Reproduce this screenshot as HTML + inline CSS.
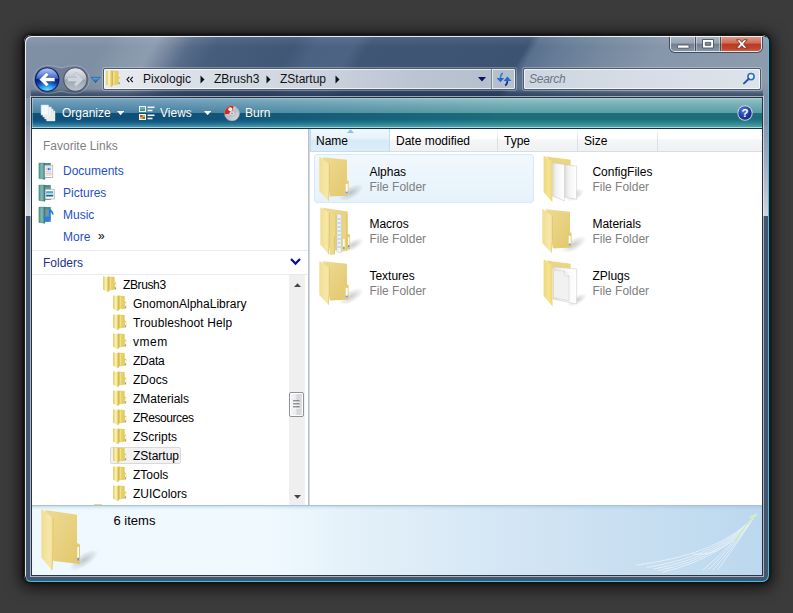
<!DOCTYPE html>
<html><head><meta charset="utf-8">
<style>
html,body{margin:0;padding:0;}
body{width:793px;height:613px;overflow:hidden;background:#3b3b3b;position:relative;font-family:"Liberation Sans",sans-serif;font-size:12px;color:#000;}
.abs{position:absolute;}
#shadow{left:24px;top:35px;width:745px;height:547px;border-radius:7px;box-shadow:0 2px 14px 5px rgba(0,0,0,.62),0 0 3px 1px rgba(0,0,0,.7);}
#win{left:24px;top:35px;width:745px;height:547px;border-radius:7px;overflow:hidden;background:#1c1c1c;}
#glass{left:0;top:0;width:745px;height:547px;
 background:linear-gradient(90deg,#8595a9 0px,#8092a8 120px,#7488a0 200px,#5d7391 300px,#47607f 390px,#425a7a 500px,#7f93ab 745px);}
#glasstop{left:0;top:0;width:745px;height:63px;
 background:
  linear-gradient(180deg,rgba(255,255,255,.10) 0,rgba(255,255,255,0) 12px,rgba(20,35,60,0) 45px,rgba(20,35,60,.10) 63px),
  linear-gradient(120deg,#8090a4 8.0px,#7f8fa3 73.8px,#8797aa 92.9px,#8d9cb0 117.1px,#7888a0 131.0px,#566c89 148.3px,#465d7c 170.8px,#405776 238.4px,#4b6283 257.4px,#4c6384 290.3px,#3f5675 304.2px,#3c5372 441.0px,#5a718e 448.8px,#667c97 472.2px,#74889f 506.8px,#8797ab 558.8px,#8c9bae 652.3px);}
#glassdark{left:0;top:181px;width:745px;height:366px;background:#43566f;}
#glasslite{left:0;top:90px;width:745px;height:91px;background:linear-gradient(180deg,rgba(255,255,255,.05),rgba(255,255,255,.25) 40%,rgba(255,255,255,.62));}
#edge{left:0;top:0;width:743px;height:545px;border-radius:7px;border:1px solid #1c1c1c;border-right-color:#37c4ee;border-bottom-color:#37c4ee;box-shadow:inset 1px 1px 0 rgba(255,255,255,.85);}
#band{left:7px;top:54px;width:732px;height:8px;background:linear-gradient(180deg,rgba(30,48,80,.0),rgba(30,48,80,.55) 50%,rgba(30,48,80,.72));}

#client{left:-24px;top:-35px;width:793px;height:613px;}
/* caption buttons */
#cap{left:670px;top:36px;width:92px;height:16px;border:1px solid rgba(255,255,255,.75);border-top:none;border-radius:0 0 5px 5px;box-sizing:border-box;overflow:hidden;box-shadow:0 0 0 1px rgba(40,50,65,.75);}
#cap .b{position:absolute;top:0;height:16px;}
#bmin{left:0;width:24px;box-shadow:inset -1px 0 0 rgba(255,255,255,.35);background:linear-gradient(180deg,#aeb8c5 0,#98a4b3 45%,#6f7e91 50%,#8c99a9 100%);border-right:1px solid rgba(40,50,65,.7);}
#bmax{left:25px;width:24px;box-shadow:inset 1px 0 0 rgba(255,255,255,.35),inset -1px 0 0 rgba(255,255,255,.35);background:linear-gradient(180deg,#aeb8c5 0,#98a4b3 45%,#6f7e91 50%,#8c99a9 100%);border-right:1px solid rgba(40,50,65,.7);}
#bclose{left:50px;width:42px;box-shadow:inset 1px 0 0 rgba(255,255,255,.35);background:linear-gradient(180deg,#e0a090 0,#cf6a55 45%,#b73a22 50%,#c5452c 80%,#d66a48 100%);}
/* address */
#addr{left:103px;top:68px;width:413px;height:22px;box-sizing:border-box;border:1px solid #4d5c70;border-radius:2px;background:linear-gradient(90deg,rgba(238,241,245,.93),rgba(226,231,238,.9) 40%,rgba(205,213,223,.88) 75%,rgba(196,205,216,.88));box-shadow:inset 0 0 0 1px rgba(255,255,255,.7),0 0 0 1px rgba(255,255,255,.28);}
#srch{left:523px;top:68px;width:238px;height:22px;box-sizing:border-box;border:1px solid #4d5c70;border-radius:2px;background:linear-gradient(90deg,rgba(214,221,230,.92),rgba(228,233,240,.92));box-shadow:inset 0 0 0 1px rgba(255,255,255,.7),0 0 0 1px rgba(255,255,255,.28);}
.at{position:absolute;top:72px;font-size:12px;line-height:14px;color:#111;white-space:nowrap;}
/* toolbar */
#tb{left:32px;top:98px;width:730px;height:31px;background:linear-gradient(180deg,#a4c6d8 0px,#7ea8c1 1px,#6f9dba 3px,#5a8eae 9px,#47819f 15px,#0f5079 15px,#0e4f78 21px,#15598a 24px,#2f7d9b 27px,#4a97ad 29px,#9fd0e0 29px,#9fd0e0 30px,#0b2947 30px);}
#tb2{left:32px;top:98px;width:730px;height:31px;background:linear-gradient(180deg,#b4d8da 0px,#93c3c8 1px,#86babf 3px,#6eaab1 9px,#5a9ea6 15px,#1e6f7b 15px,#1d6d79 21px,#25808a 24px,#3d9499 27px,#52a4a7 29px,#a8dada 29px,#a8dada 30px,#0b2947 30px);-webkit-mask-image:linear-gradient(90deg,rgba(0,0,0,0) 120px,rgba(0,0,0,1) 480px);mask-image:linear-gradient(90deg,rgba(0,0,0,0) 120px,rgba(0,0,0,1) 480px);}
#tbhl{left:32px;top:98px;width:1px;height:30px;background:rgba(255,255,255,.35);}
.tt{position:absolute;top:106px;font-size:12px;line-height:14px;color:#fff;white-space:nowrap;text-shadow:0 0 1px rgba(0,0,0,.25);}
#tbborder{left:31px;top:97px;width:732px;height:479px;box-sizing:border-box;border:1px solid #27323f;pointer-events:none;}
#tbborder2{left:30px;top:96px;width:734px;height:481px;box-sizing:border-box;border:1px solid rgba(255,255,255,.55);pointer-events:none;}
/* panes */
#left{left:32px;top:128px;width:276px;height:377px;background:#fff;overflow:hidden;}
#divider{left:308px;top:128px;width:2px;height:377px;background:linear-gradient(90deg,#a9b4c2,#dfe4ea);}
#right{left:310px;top:128px;width:452px;height:377px;background:#fff;overflow:hidden;}
#det{left:32px;top:505px;width:730px;height:70px;background:linear-gradient(180deg,rgba(140,180,210,.45) 0,rgba(140,180,210,.18) 1.5px,rgba(140,180,210,0) 4px),linear-gradient(90deg,#eef8fe 0,#f0f9fe 230px,#e3f0f9 330px,#cfe3f3 520px,#bcd8ee 730px);border-top:1px solid #a9c5d9;box-sizing:border-box;overflow:hidden;}

/* left pane (coords relative to #left: page x-32, y-128) */
.fl{position:absolute;left:31px;font-size:12px;line-height:14px;color:#1f50c4;white-space:nowrap;}
.hd{position:absolute;font-size:12px;line-height:14px;white-space:nowrap;}
.sep{position:absolute;left:0;width:276px;height:1px;background:#e9eaec;}
.tr{position:absolute;font-size:12px;line-height:14px;color:#000;white-space:nowrap;}
#sb{left:257px;top:147px;width:16px;height:231px;background:#efefef;}
#thumb{left:257px;top:264px;width:15px;height:25px;box-sizing:border-box;border:1px solid #8e9298;border-radius:2px;background:linear-gradient(90deg,#f6f6f6 0,#ececec 45%,#d4d6d9 55%,#dfe0e2 100%);box-shadow:inset 0 0 0 1px #fff;}
#sel{left:78px;top:319px;width:71px;height:17px;box-sizing:border-box;border:1px solid #d9d9d9;border-radius:2px;background:#f2f2f2;}

/* right pane (relative: page x-310, y-128) */
#hdr{left:0;top:0;width:452px;height:24px;background:linear-gradient(180deg,#fff 0,#fff 45%,#f4f5f6 55%,#f0f1f2 100%);border-bottom:1px solid #d9dde2;box-sizing:border-box;}
#hname{left:0;top:0;width:80px;height:24px;box-sizing:border-box;border:1px solid #c3dcee;border-top:none;background:linear-gradient(180deg,#f3f9fd 0,#e6f2fa 45%,#d6eaf7 55%,#dcedf8 100%);}
.hs{position:absolute;top:0;width:1px;height:23px;background:linear-gradient(180deg,#fff,#dcdfe3 50%,#dcdfe3);}
.ht{position:absolute;top:6px;font-size:12px;line-height:14px;color:#000;white-space:nowrap;}
.it{position:absolute;font-size:12px;line-height:14px;color:#000;white-space:nowrap;}
.is{position:absolute;font-size:12px;line-height:14px;color:#808080;white-space:nowrap;}
#isel{left:4px;top:26px;width:220px;height:49px;box-sizing:border-box;border:1px solid #d6eaf7;border-radius:3px;background:linear-gradient(180deg,#f1f8fd,#e6f2fb);}

#detline{left:32px;top:575px;width:730px;height:1px;background:#2b3644;}
</style></head><body>

<svg width="0" height="0" style="position:absolute">
 <defs>
  <linearGradient id="gf" x1="0" y1="0" x2="1" y2="0"><stop offset="0" stop-color="#f6e9a8"/><stop offset="1" stop-color="#ead27c"/></linearGradient>
  <linearGradient id="gb" x1="0" y1="0" x2="1" y2="0"><stop offset="0" stop-color="#e6cf7c"/><stop offset="1" stop-color="#efdc94"/></linearGradient>
    <linearGradient id="gsf" x1="0" y1="0" x2="1" y2="0"><stop offset="0" stop-color="#dcc24a"/><stop offset=".3" stop-color="#f3e594"/><stop offset=".5" stop-color="#fbf5cc"/><stop offset=".75" stop-color="#ecd878"/><stop offset="1" stop-color="#d9bd4c"/></linearGradient>
  <linearGradient id="gsb" x1="0" y1="0" x2="1" y2="0"><stop offset="0" stop-color="#d4b848"/><stop offset=".35" stop-color="#e9d470"/><stop offset="1" stop-color="#dfc558"/></linearGradient>
  <symbol id="sf" viewBox="0 0 14 16">
   <path d="M4.5 0.5 L11.7 0.9 L11.7 6.6 L13.2 7 L13.2 13.4 L5 14.6 Z" fill="url(#gsb)"/>
   <path d="M0.2 0.2 L5.7 1.4 L5.7 15.9 L4.6 15.9 L0.2 13.8 Z" fill="url(#gsf)"/>
   <path d="M6.7 2 L7.7 2.1 L7.7 13.4 L6.7 13.6 Z" fill="#f6eaa6" opacity=".85"/>
   <path d="M5.7 1.4 L6.3 1.6 L6.3 14.4 L5.7 14.6 Z" fill="#c9ad42" opacity=".8"/>
   <rect x="11.9" y="8" width=".9" height="5" fill="#fff"/><rect x="11.9" y="11.4" width=".9" height="1.5" fill="#3f86e6"/>
  </symbol>

  <linearGradient id="gfl" x1="0" y1="0" x2="1" y2="0"><stop offset="0" stop-color="#f1dd8f"/><stop offset=".7" stop-color="#f6e8ab"/><stop offset="1" stop-color="#efdb8c"/></linearGradient>
  <linearGradient id="gbk" x1="0" y1="0" x2="1" y2="1"><stop offset="0" stop-color="#eedb92"/><stop offset="1" stop-color="#e2c76c"/></linearGradient>
  <linearGradient id="gpg" x1="0" y1="0" x2="1" y2="0"><stop offset="0" stop-color="#dedede"/><stop offset=".35" stop-color="#f3f3f3"/><stop offset="1" stop-color="#ffffff"/></linearGradient>
  <radialGradient id="gsh" cx=".5" cy=".5" r=".5"><stop offset="0" stop-color="#000" stop-opacity=".2"/><stop offset="1" stop-color="#000" stop-opacity="0"/></radialGradient>
  <symbol id="bf" viewBox="0 0 48 52">
   <ellipse cx="35" cy="39.5" rx="14" ry="6" fill="url(#gsh)" transform="rotate(-30 35 39.5)"/>
   <path d="M6.7 4.3 L31 6.8 L31 27.3 L32.6 28 L32.6 42.5 L14 43.5 Z" fill="url(#gbk)"/>
   <path d="M3.3 3.4 L14 11.7 L14 31.2 L12.6 47.9 L3.3 38 Z" fill="url(#gfl)"/>
   <path d="M14 11.7 L14 31.2 L12.6 47.9 L12.2 47.5 L13.2 31 L13.2 11.2 Z" fill="#e0c566"/>
   <rect x="29.7" y="30.8" width="2" height="10.2" fill="#fff"/><rect x="29.7" y="38.6" width="2" height="2" fill="#5b96e6"/>
  </symbol>
  <linearGradient id="gfl2" x1="0" y1="0" x2="1" y2="0"><stop offset="0" stop-color="#f0d878"/><stop offset=".6" stop-color="#f5e394"/><stop offset="1" stop-color="#eed672"/></linearGradient>
  <symbol id="bf1" viewBox="0 0 48 52">
   <ellipse cx="38" cy="43" rx="11" ry="4.5" fill="url(#gsh)" transform="rotate(-28 38 43)"/>
   <path d="M7 3.5 L31.7 6.7 L31.7 12 L14 12 Z" fill="#ecd57f"/>
   <path d="M14 9.7 L37.6 12 L37.6 47 L14 42 Z" fill="url(#gpg)" stroke="#c9c9c9" stroke-width=".5"/>
   <path d="M14.5 13.2 L25.2 14 L25.6 18.4 L30 19.4 L30 43.8 L14.5 40.6 Z" fill="#f1f1f1" stroke="#d2d2d2" stroke-width=".6"/>
   <path d="M25.2 14 L30 19.4 L25.6 18.4 Z" fill="#fff" stroke="#c8c8c8" stroke-width=".5"/>
   <path d="M4.6 2.3 L13.5 8.7 L13.5 49.3 L4.6 39 Z" fill="url(#gfl2)"/>
  </symbol>
  <symbol id="bf2" viewBox="0 0 48 52">
   <ellipse cx="36" cy="42" rx="10" ry="5" fill="url(#gsh)" transform="rotate(-28 36 42)"/>
   <path d="M7 3.5 L31.7 6.7 L31.7 12 L14 12 Z" fill="#ecd57f"/>
   <path d="M25.8 11.7 L37.6 13 L37.6 46.4 L25.8 44 Z" fill="url(#gpg)" stroke="#c4c4c4" stroke-width=".5"/>
   <path d="M13.6 9.7 L25.4 11.5 L25.4 47.9 L13.6 43 Z" fill="url(#gpg)" stroke="#c4c4c4" stroke-width=".5"/>
   <path d="M4.6 2.4 L13.4 9.2 L13.4 49.3 L4.6 39 Z" fill="url(#gfl2)"/>
  </symbol>
  <symbol id="bf3" viewBox="0 0 48 52">
   <ellipse cx="37" cy="40" rx="12" ry="5" fill="url(#gsh)" transform="rotate(-28 37 40)"/>
   <path d="M6.7 2.8 L31.7 6.5 L31.7 28.8 L34.1 29.7 L34.1 43.9 L14 46 Z" fill="url(#gbk)"/>
   <path d="M25.3 8.2 L31.2 9 L31.2 45.2 L25.3 46.9 Z" fill="#e9d480"/>
   <path d="M30.4 9 L31.2 9 L31.2 45.2 L30.4 45.4 Z" fill="#d9bf5e"/>
   <path d="M20.9 9 L25.3 9.6 L25.3 47.8 L20.9 47.2 Z" fill="#eef2f8" stroke="#b4c0d0" stroke-width=".4"/>
   <path d="M21.6 14 H24.6 M21.6 18 H24.6 M21.6 22 H24.6 M21.6 26 H24.6 M21.6 30 H24.6 M21.6 34 H24.6 M21.6 38 H24.6 M21.6 42 H24.6" stroke="#a9c0de" stroke-width="1.4" opacity=".7"/>
   <path d="M14 8.6 L20.4 9.7 L20.4 31.2 L19 32 L19 49.3 L14 50 Z" fill="#edd98a"/>
   <path d="M19.6 9.6 L20.4 9.7 L20.4 31.2 L19 32 L19 49.3 L18.3 49.4 L18.3 31.6 L19.6 30.8 Z" fill="#d9bf5e"/>
   <path d="M4.3 2.3 L13.6 8.2 L13.6 31.2 L13.1 49.8 L4.3 39.5 Z" fill="url(#gfl)"/>
   <path d="M13.6 8.2 L13.6 31.2 L13.1 49.8 L12.5 49.1 L12.9 31 L12.9 7.8 Z" fill="#dcc262"/>
   <rect x="27.2" y="34" width="1.4" height="10" fill="#fff"/><rect x="27.2" y="41.8" width="1.4" height="2.2" fill="#4f90e6"/>
   <rect x="32.1" y="32.2" width="1.3" height="10" fill="#fff"/><rect x="32.1" y="40" width="1.3" height="2.2" fill="#4f90e6"/>
  </symbol>

  <linearGradient id="gfv" x1="0" y1="0" x2="1" y2="0"><stop offset="0" stop-color="#3a9a76"/><stop offset=".2" stop-color="#62a99c"/><stop offset=".5" stop-color="#8fb3c6"/><stop offset=".8" stop-color="#4f9a8e"/><stop offset="1" stop-color="#28697a"/></linearGradient>
  <symbol id="fvb" viewBox="0 0 18 20">
   <path d="M5 1 L12.8 1 L12.8 15.8 L6.5 16 Z" fill="#4a9484"/>
   <path d="M7 3.2 L12.8 3.2 L12.8 15.8 L7 16 Z" fill="#7d8fa3"/>
   <path d="M0.9 1.1 L7 1.1 L7 17.2 L6 17.2 L0.9 16.4 Z" fill="url(#gfv)" stroke="#2f8468" stroke-width=".4"/>
  </symbol>
 </defs>
</svg>
<div id="shadow" class="abs"></div>
<div id="win" class="abs">
 <div id="glass" class="abs"></div>
 <div id="glasstop" class="abs"></div>
 <div id="glasslite" class="abs"></div>
 <div id="glassdark" class="abs"></div>
 <div id="band" class="abs"></div>

 <div id="client" class="abs">
  <div id="tbborder2" class="abs"></div>
  <div id="tbborder" class="abs"></div>
  <div id="cap" class="abs"><div id="bmin" class="b"></div><div id="bmax" class="b"></div><div id="bclose" class="b"></div></div>

  <svg class="abs" style="left:670px;top:36px" width="93" height="17" viewBox="0 0 93 17">
   <rect x="7.5" y="9" width="11.5" height="3.2" rx=".6" fill="#fff" stroke="#4a5564" stroke-width=".9"/>
   <path d="M32.5 3.5 H43.5 V12 H32.5 Z M35.3 6.4 V9.3 H40.7 V6.4 Z" fill="#fff" fill-rule="evenodd" stroke="#4a5564" stroke-width=".9"/>
   <path d="M66.5 3.8 L69.8 3.8 L71.8 6.3 L73.8 3.8 L77.1 3.8 L73.5 8 L77.3 12.2 L73.9 12.2 L71.8 9.7 L69.7 12.2 L66.3 12.2 L70.1 8 Z" fill="#fff" stroke="#5a2418" stroke-width=".8"/>
  </svg>
  <div id="addr" class="abs"></div>
  <div id="srch" class="abs"></div>
  <div class="at" style="left:143px">Pixologic</div>
  <div class="at" style="left:214px">ZBrush3</div>
  <div class="at" style="left:280px">ZStartup</div>
  <div class="at" style="left:529px;color:#6d7683;font-style:italic;letter-spacing:-0.25px">Search</div>

  <svg class="abs" style="left:30px;top:62px" width="75" height="36" viewBox="0 0 75 36">
   <defs>
    <linearGradient id="nb1" x1="0" y1="0" x2="0" y2="1"><stop offset="0" stop-color="#7c9ae6"/><stop offset=".46" stop-color="#2e57c8"/><stop offset=".5" stop-color="#0a1d84"/><stop offset=".72" stop-color="#0a45b4"/><stop offset=".9" stop-color="#1e9cf0"/><stop offset="1" stop-color="#48d0ff"/></linearGradient>
    <radialGradient id="nb3" cx=".5" cy="1" r=".55"><stop offset="0" stop-color="#6fe4ff" stop-opacity=".95"/><stop offset="1" stop-color="#2aa0ff" stop-opacity="0"/></radialGradient>
    <linearGradient id="nb2" x1="0" y1="0" x2="0" y2="1"><stop offset="0" stop-color="#fff" stop-opacity=".75"/><stop offset="1" stop-color="#fff" stop-opacity=".05"/></linearGradient>
    <linearGradient id="nf1" x1="0" y1="0" x2="0" y2="1"><stop offset="0" stop-color="#d3d9e0"/><stop offset=".48" stop-color="#b4bcc7"/><stop offset=".52" stop-color="#9aa4b1"/><stop offset="1" stop-color="#bcc4ce"/></linearGradient>
    <linearGradient id="nd1" x1="0" y1="0" x2="0" y2="1"><stop offset="0" stop-color="#56b4f0"/><stop offset="1" stop-color="#1558a8"/></linearGradient>
   </defs>
   <path d="M17.2 3.6 A13.9 13.9 0 0 0 17.2 31.4 Q24 31.4 31.3 29 Q38.6 31.4 45.4 31.4 A13.9 13.9 0 0 0 45.4 3.6 Q38.6 3.6 31.3 6 Q24 3.6 17.2 3.6 Z" fill="rgba(50,65,90,.22)" stroke="rgba(255,255,255,.28)" stroke-width="1"/>
   <circle cx="17.2" cy="17.5" r="11.7" fill="url(#nb1)" stroke="#0e1c60" stroke-width="1.1"/>
   <circle cx="17.2" cy="17.5" r="11.1" fill="url(#nb3)"/>
   <path d="M6.9 15.5 A10.4 10.4 0 0 1 27.5 15.5 Q17.2 18.5 6.9 15.5 Z" fill="url(#nb2)" opacity=".55"/>
   <path d="M9.3 17.5 L16.4 10.2 L18.9 12.7 L16.2 15.5 L24.9 15.5 L24.9 19.5 L16.2 19.5 L18.9 22.3 L16.4 24.8 Z" fill="#fff" stroke="#23439c" stroke-width=".5"/>
   <circle cx="45.4" cy="17.5" r="11.7" fill="url(#nf1)" stroke="#4a5564" stroke-width="1.1"/>
   <path d="M35.1 15.5 A10.4 10.4 0 0 1 55.7 15.5 Q45.4 18.5 35.1 15.5 Z" fill="url(#nb2)" opacity=".5"/>
   <path d="M53.3 17.5 L46.2 10.2 L43.7 12.7 L46.4 15.5 L37.7 15.5 L37.7 19.5 L46.4 19.5 L43.7 22.3 L46.2 24.8 Z" fill="#cfd5dc" stroke="#a3adb9" stroke-width=".4"/>
   <path d="M61 15.3 L70.1 15.3 L65.55 20.6 Z" fill="url(#nd1)" stroke="#1f5394" stroke-width=".7"/>
  </svg>
  <svg class="abs" style="left:106px;top:70px" width="15" height="17" viewBox="0 0 14 16"><use href="#sf"/></svg>
  <svg class="abs" style="left:126px;top:76px" width="8" height="7" viewBox="0 0 8 7" fill="none" stroke="#111" stroke-width="1.15"><path d="M3.3 0.8 L1 3.5 L3.3 6.2"/><path d="M6.8 0.8 L4.5 3.5 L6.8 6.2"/></svg>
  <svg class="abs" style="left:200px;top:75px" width="5" height="9" viewBox="0 0 5 9"><path d="M0.5 0.5 L4.5 4.5 L0.5 8.5 Z" fill="#111"/></svg>
  <svg class="abs" style="left:266px;top:75px" width="5" height="9" viewBox="0 0 5 9"><path d="M0.5 0.5 L4.5 4.5 L0.5 8.5 Z" fill="#111"/></svg>
  <svg class="abs" style="left:335px;top:75px" width="5" height="9" viewBox="0 0 5 9"><path d="M0.5 0.5 L4.5 4.5 L0.5 8.5 Z" fill="#111"/></svg>
  <svg class="abs" style="left:478px;top:77px" width="8" height="5" viewBox="0 0 8 5"><path d="M0 0 L8 0 L4 4.5 Z" fill="#10106a"/></svg>
  <div class="abs" style="left:491px;top:69px;width:1px;height:20px;background:#7d8896"></div>
  <div class="abs" style="left:492px;top:69px;width:1px;height:20px;background:rgba(255,255,255,.6)"></div>
  <svg class="abs" style="left:496px;top:71px" width="16" height="16" viewBox="0 0 16 16" fill="none">
   <path d="M7 2.3 Q4.6 2.6 4.5 7.4" stroke="#2a86d0" stroke-width="1.7" fill="none"/>
   <path d="M0.6 6.9 L8.2 6.9 L4.4 11.2 Z" fill="#2468d0"/>
   <path d="M11.3 9.2 Q11.4 13.6 9 14.4" stroke="#16307c" stroke-width="1.7" fill="none"/>
   <path d="M11.4 5.5 L15.4 9.9 L7.6 9.9 Z" fill="#2468d0"/>
  </svg>
  <svg class="abs" style="left:741px;top:71px" width="16" height="16" viewBox="0 0 16 16" fill="none">
   <circle cx="10" cy="5.6" r="3.1" stroke="#2a6fd0" stroke-width="1.6" fill="rgba(255,255,255,.55)"/>
   <path d="M7.6 8 L3 12.4" stroke="#1f56b0" stroke-width="2" stroke-linecap="round"/>
  </svg>
  <div id="tb" class="abs"></div><div id="tb2" class="abs"></div><div id="tbhl" class="abs"></div>

  <svg class="abs" style="left:40px;top:104px" width="17" height="18" viewBox="0 0 17 18">
   <path d="M6.5 7 L15 7 L15 17 L6.5 17 Z" fill="#f4f6f8" stroke="#c4ccd4" stroke-width=".5"/>
   <path d="M4.7 5 L13.2 5 L13.2 15 L4.7 15 Z" fill="#f4f6f8" stroke="#c4ccd4" stroke-width=".5"/>
   <path d="M2.9 3 L11.4 3 L11.4 13 L2.9 13 Z" fill="#f4f6f8" stroke="#c4ccd4" stroke-width=".5"/>
   <path d="M1.1 1 L8.6 1 L8.6 11 L1.1 11 Z" fill="#f2f8fc" stroke="#d0d8e0" stroke-width=".5"/>
  </svg>
  <svg class="abs" style="left:117px;top:110.8px" width="7.2" height="4.3" viewBox="0 0 7 4"><path d="M0 0 L7 0 L3.5 4 Z" fill="#fff"/></svg>
  <svg class="abs" style="left:139px;top:105px" width="16" height="16" viewBox="0 0 16 16">
   <rect x=".5" y="1.5" width="6" height="5" fill="#6aa6e6" stroke="#f4f4f4" stroke-width="1"/>
   <rect x="1" y="4.5" width="5" height="1.5" fill="#3f9a4a"/>
   <rect x=".5" y="9.5" width="6" height="5" fill="#e2b43a" stroke="#f4f4f4" stroke-width="1"/>
   <rect x="1" y="10" width="2.5" height="2" fill="#d04a3a"/><rect x="3.5" y="12" width="2.5" height="2" fill="#4a9a3a"/>
   <rect x="8.5" y="1.5" width="7" height="1.6" fill="#f2f4f6"/><rect x="8.5" y="4.7" width="5" height="1.6" fill="#f2f4f6"/>
   <rect x="8.5" y="9.5" width="7" height="1.6" fill="#f2f4f6"/><rect x="8.5" y="12.7" width="5" height="1.6" fill="#f2f4f6"/>
  </svg>
  <svg class="abs" style="left:204px;top:110.8px" width="7.2" height="4.3" viewBox="0 0 7 4"><path d="M0 0 L7 0 L3.5 4 Z" fill="#fff"/></svg>
  <svg class="abs" style="left:223px;top:104px" width="18" height="18" viewBox="0 0 18 18">
   <defs><linearGradient id="cdg" x1="0" y1="0" x2="1" y2="1"><stop offset="0" stop-color="#f4f4f6"/><stop offset=".5" stop-color="#b8bcc4"/><stop offset="1" stop-color="#e4e6ea"/></linearGradient></defs>
   <circle cx="9" cy="9.3" r="7.6" fill="url(#cdg)" stroke="#8e96a2" stroke-width=".6"/>
   <path d="M9 9.3 L1.6 10.5 A7.6 7.6 0 0 1 10.5 1.9 Z" fill="#d8271c"/>
   <circle cx="7.3" cy="5.3" r="2" fill="#fff" opacity=".95"/>
   <circle cx="9" cy="9.3" r="2.3" fill="#e9ebee" stroke="#a9afb8" stroke-width=".5"/>
   <circle cx="9" cy="9.3" r=".9" fill="#5e8c98"/>
  </svg>
  <svg class="abs" style="left:736px;top:104px" width="18" height="18" viewBox="0 0 18 18">
   <defs><radialGradient id="hg" cx=".4" cy=".3" r=".8"><stop offset="0" stop-color="#5a7fe0"/><stop offset=".6" stop-color="#1c3aa8"/><stop offset="1" stop-color="#10257a"/></radialGradient></defs>
   <circle cx="9" cy="9" r="7.7" fill="#d4dbe6" opacity=".9"/>
   <circle cx="9" cy="9" r="6.7" fill="url(#hg)"/>
   <text x="9" y="13.2" font-family="Liberation Sans, sans-serif" font-weight="bold" font-size="11.5" fill="#fff" text-anchor="middle">?</text>
  </svg>
  <div class="tt" style="left:62px">Organize</div>
  <div class="tt" style="left:160px">Views</div>
  <div class="tt" style="left:245px">Burn</div>
  <div id="left" class="abs">
   <div class="hd" style="left:11px;top:11px;color:#7f7f7f">Favorite Links</div>

   <svg class="abs" style="left:6px;top:34px" width="18" height="20" viewBox="0 0 18 20"><use href="#fvb"/>
    <rect x="6.8" y="3.2" width="8" height="12.4" fill="#fff" stroke="#9a9a9a" stroke-width=".6"/>
    <rect x="9.4" y="5.6" width="3.8" height="3" fill="#d6ebff"/><circle cx="10.6" cy="7.2" r="1.1" fill="#1f6ff0"/><rect x="12.2" y="6.4" width="1" height="1.4" fill="#4f96f0"/>
    <path d="M7.6 5 H13.6 M7.6 9.8 H13.6 M7.6 13 H13.6" stroke="#d9a79a" stroke-width=".7"/><path d="M7.6 11.4 H13.6 M7.6 6.6 H9 M7.6 8.2 H9" stroke="#a9b4c4" stroke-width=".7"/>
   </svg>
   <svg class="abs" style="left:6px;top:56px" width="18" height="20" viewBox="0 0 18 20"><use href="#fvb"/>
    <rect x="7.2" y="5.2" width="9" height="9.8" fill="#fff" stroke="#9a9a9a" stroke-width=".6"/>
    <rect x="8.2" y="7.2" width="7" height="5.2" fill="#4f9fe6"/><rect x="8.2" y="9.4" width="7" height="1.3" fill="#e8f3fb"/><rect x="8.2" y="10.9" width="7" height="1.5" fill="#2f6a5a"/>
   </svg>
   <svg class="abs" style="left:6px;top:78px" width="18" height="20" viewBox="0 0 18 20"><use href="#fvb"/>
    <path d="M10.8 3 L12.2 3 Q15.2 4.4 15.6 8.8 L14.1 8.6 Q13.7 6.4 12.2 6 L12.2 13 A2.9 2.5 0 1 1 10.8 10.9 Z" fill="#1f82e6"/>
   </svg>
   <div class="fl" style="top:36px">Documents</div>
   <div class="fl" style="top:58px">Pictures</div>
   <div class="fl" style="top:80px">Music</div>
   <div class="fl" style="top:102px">More</div>
   <div class="hd" style="left:66px;top:101px;color:#000;font-size:12px">&raquo;</div>
   <div class="sep" style="top:122px"></div>
   <div class="hd" style="left:11px;top:128px;color:#1e2f8c">Folders</div>
   <div class="sep" style="top:146px"></div>
   <div id="sb" class="abs"></div>
   <div id="thumb" class="abs"></div>

   <svg class="abs" style="left:262px;top:154.5px" width="7" height="4" viewBox="0 0 7 4"><path d="M0 4 L3.5 0.2 L7 4 Z" fill="#454545"/></svg>
   <svg class="abs" style="left:262px;top:366.5px" width="7" height="4" viewBox="0 0 7 4"><path d="M0 0 L7 0 L3.5 3.8 Z" fill="#454545"/></svg>
   <svg class="abs" style="left:261px;top:272px" width="7" height="9" viewBox="0 0 7 9"><path d="M0 1 H6.5 M0 4 H6.5 M0 7 H6.5" stroke="#3a3a3a" stroke-width="1"/><path d="M0 2 H6.5 M0 5 H6.5 M0 8 H6.5" stroke="#fff" stroke-width="1"/></svg>
   <svg class="abs" style="left:258px;top:130px" width="11" height="8" viewBox="0 0 11 8" fill="none"><path d="M1 1 L5.5 5.6 L10 1" stroke="#10109c" stroke-width="2.2"/></svg>
   <div id="sel" class="abs"></div>
   <div class="abs" style="left:62px;top:375.5px;width:8px;height:2px;background:#ecd878"></div>
<svg class="abs" style="left:71px;top:147.5px" width="14" height="16" viewBox="0 0 14 16"><use href="#sf"/></svg><div class="tr" style="left:91px;top:149.5px;letter-spacing:-0.38px">ZBrush3</div>
<svg class="abs" style="left:81px;top:166.5px" width="14" height="16" viewBox="0 0 14 16"><use href="#sf"/></svg><div class="tr" style="left:101px;top:168.5px">GnomonAlphaLibrary</div>
<svg class="abs" style="left:81px;top:185.5px" width="14" height="16" viewBox="0 0 14 16"><use href="#sf"/></svg><div class="tr" style="left:101px;top:187.5px;letter-spacing:0.1px">Troubleshoot Help</div>
<svg class="abs" style="left:81px;top:204.5px" width="14" height="16" viewBox="0 0 14 16"><use href="#sf"/></svg><div class="tr" style="left:101px;top:206.5px;letter-spacing:0.5px">vmem</div>
<svg class="abs" style="left:81px;top:223.5px" width="14" height="16" viewBox="0 0 14 16"><use href="#sf"/></svg><div class="tr" style="left:101px;top:225.5px;letter-spacing:-0.25px">ZData</div>
<svg class="abs" style="left:81px;top:242.5px" width="14" height="16" viewBox="0 0 14 16"><use href="#sf"/></svg><div class="tr" style="left:101px;top:244.5px">ZDocs</div>
<svg class="abs" style="left:81px;top:261.5px" width="14" height="16" viewBox="0 0 14 16"><use href="#sf"/></svg><div class="tr" style="left:101px;top:263.5px">ZMaterials</div>
<svg class="abs" style="left:81px;top:280.5px" width="14" height="16" viewBox="0 0 14 16"><use href="#sf"/></svg><div class="tr" style="left:101px;top:282.5px;letter-spacing:-0.42px">ZResources</div>
<svg class="abs" style="left:81px;top:299.5px" width="14" height="16" viewBox="0 0 14 16"><use href="#sf"/></svg><div class="tr" style="left:101px;top:301.5px">ZScripts</div>
<svg class="abs" style="left:81px;top:318.5px" width="14" height="16" viewBox="0 0 14 16"><use href="#sf"/></svg><div class="tr" style="left:101px;top:320.5px">ZStartup</div>
<svg class="abs" style="left:81px;top:337.5px" width="14" height="16" viewBox="0 0 14 16"><use href="#sf"/></svg><div class="tr" style="left:101px;top:339.5px">ZTools</div>
<svg class="abs" style="left:81px;top:356.5px" width="14" height="16" viewBox="0 0 14 16"><use href="#sf"/></svg><div class="tr" style="left:101px;top:358.5px">ZUIColors</div>
</div>
  <div id="divider" class="abs"></div>
  <div id="right" class="abs">
   <div id="hdr" class="abs"></div>
   <div id="hname" class="abs"></div>
   <div class="hs" style="left:187px"></div><div class="hs" style="left:267px"></div><div class="hs" style="left:347px"></div>
   <div class="ht" style="left:6px">Name</div>
   <div class="ht" style="left:86px">Date modified</div>
   <div class="ht" style="left:194px">Type</div>
   <div class="ht" style="left:274px">Size</div>
   <svg class="abs" style="left:37px;top:1px" width="7" height="4" viewBox="0 0 7 4"><path d="M0 4 L3.5 0.3 L7 4 Z" fill="#8fc0e0"/></svg>
   <div id="isel" class="abs"></div>
<svg class="abs" style="left:6px;top:25px" width="48" height="52" viewBox="0 0 48 52"><use href="#bf"/></svg><div class="it" style="left:59.4px;top:36.5px">Alphas</div><div class="is" style="left:59.4px;top:51.5px">File Folder</div>
<svg class="abs" style="left:229px;top:25px" width="48" height="52" viewBox="0 0 48 52"><use href="#bf2"/></svg><div class="it" style="left:282.4px;top:36.5px">ConfigFiles</div><div class="is" style="left:282.4px;top:51.5px">File Folder</div>
<svg class="abs" style="left:6px;top:77px" width="48" height="52" viewBox="0 0 48 52"><use href="#bf3"/></svg><div class="it" style="left:59.4px;top:88.5px">Macros</div><div class="is" style="left:59.4px;top:103.5px">File Folder</div>
<svg class="abs" style="left:229px;top:77px" width="48" height="52" viewBox="0 0 48 52"><use href="#bf"/></svg><div class="it" style="left:282.4px;top:88.5px">Materials</div><div class="is" style="left:282.4px;top:103.5px">File Folder</div>
<svg class="abs" style="left:6px;top:129px" width="48" height="52" viewBox="0 0 48 52"><use href="#bf"/></svg><div class="it" style="left:59.4px;top:140.5px">Textures</div><div class="is" style="left:59.4px;top:155.5px">File Folder</div>
<svg class="abs" style="left:229px;top:129px" width="48" height="52" viewBox="0 0 48 52"><use href="#bf1"/></svg><div class="it" style="left:282.4px;top:140.5px">ZPlugs</div><div class="is" style="left:282.4px;top:155.5px">File Folder</div>
</div>
  <div id="det" class="abs">
   <svg class="abs" style="left:6px;top:-1px" width="70" height="70" viewBox="0 0 70 70">
    <ellipse cx="46" cy="55" rx="17" ry="6.5" fill="url(#gsh)" transform="rotate(-33 46 55)"/>
    <path d="M7 5 L39 9.8 L39 38 L42 39.6 L42 59 L15.5 56 Z" fill="url(#gbk)"/>
    <path d="M3.4 4.1 L15.5 13.3 L15.5 43.3 L14.2 65.5 L3.4 52.4 Z" fill="url(#gfl)"/>
    <path d="M15.5 13.3 L15.5 43.3 L14.2 65.5 L13.6 64.7 L14.6 43 L14.6 12.6 Z" fill="#dfc465"/>
    <rect x="39.3" y="42" width="1.7" height="14" fill="#fff"/><rect x="39.3" y="52.8" width="1.7" height="3" fill="#5b96e6"/>
   </svg>
   <div class="abs" style="left:81.5px;top:7px;font-size:13px;line-height:16px;color:#000;white-space:nowrap">6 items</div>
   <svg class="abs" style="left:590px;top:0px" width="140" height="70" viewBox="0 0 140 70" fill="none" stroke-linecap="round">
    <g stroke="#fff" stroke-width=".7" opacity=".75">
     <path d="M133 9.5 Q100 48 15 59"/>
     <path d="M133 9.5 Q100 49 25 61.5"/>
     <path d="M133 9.5 Q101 50 32 63"/>
     <path d="M133 9.5 Q102 51 37 64.5"/>
     <path d="M133 9.5 Q103 52 41 66"/>
     <path d="M133 9.5 Q104 52 71 48"/>
     <path d="M133 9.5 Q112 38 81 64"/>
     <path d="M133 9.5 Q113 38 86 64"/>
     <path d="M133 9.5 Q114 38 91 64"/>
     <path d="M133 9.5 Q115 38 96 63.5"/>
    </g>
    <path d="M134 9 Q125 17 113 35" stroke="#c6e8b4" stroke-width="1.6" opacity=".9"/>
    <path d="M134 9 L129 11" stroke="#d2efc0" stroke-width="2.2"/>
   </svg>
</div>
  <div id="detline" class="abs"></div>
  <div class="abs" style="left:32px;top:128px;width:730px;height:1px;background:#12304c"></div>
 </div>
 <div id="edge" class="abs"></div>
</div>
</body></html>
